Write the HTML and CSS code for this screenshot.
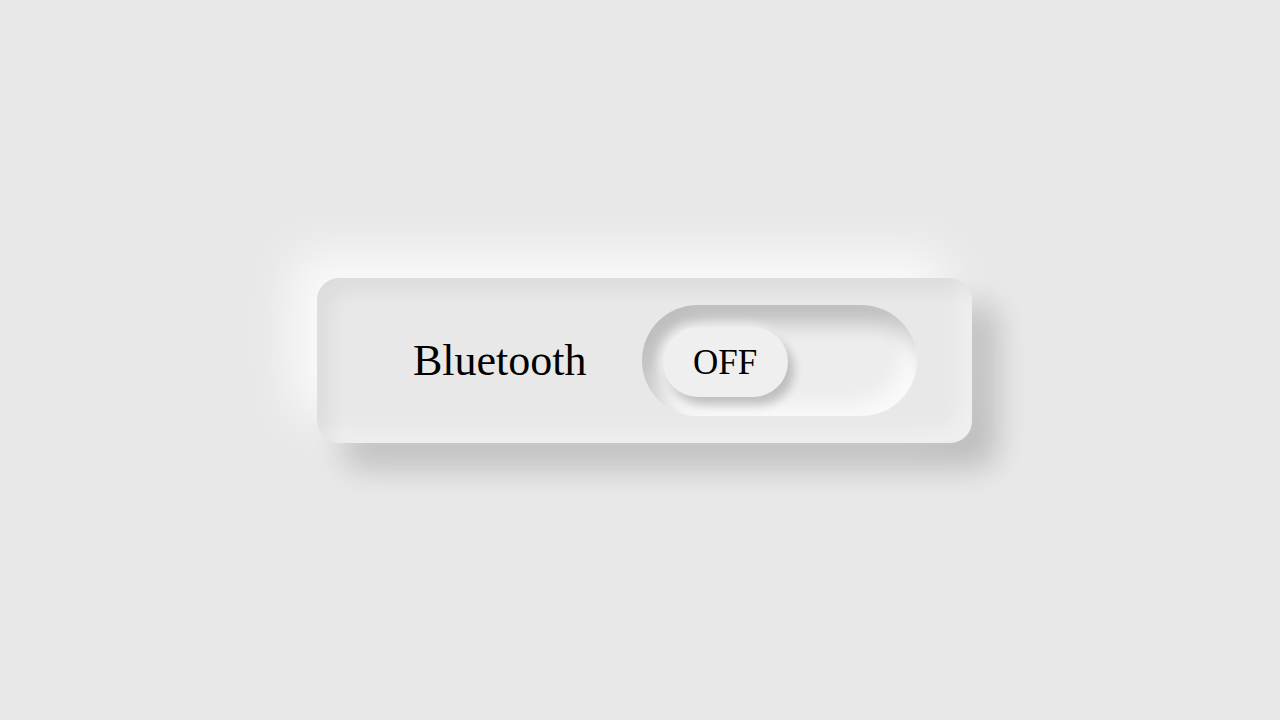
FILE: index.html
```html
<!DOCTYPE html>
<html lang="en">
<head>
    <meta charset="UTF-8">
    <meta name="viewport" content="width=device-width, initial-scale=1.0">
    <title>Bluetooth</title>
    <link rel="stylesheet" href="styles.css">
</head>
<body>
    <div class="page">
        <div class="card">
            <span class="label">Bluetooth</span>
            <div class="track">
                <div class="knob">OFF</div>
            </div>
        </div>
    </div>
</body>
</html>
```

FILE: styles.css
```css
* {
    margin: 0;
    padding: 0;
    box-sizing: border-box;
}

html, body {
    width: 100%;
    height: 100%;
    background-color: #e8e8e8;
}

body {
    font-family: "Liberation Serif", "Times New Roman", serif;
    color: #000;
}

.page {
    height: 100vh;
    display: flex;
    align-items: center;
    justify-content: center;
    padding-left: 9px;
}

.card {
    width: 655px;
    height: 165px;
    border-radius: 22px;
    background: #e8e8e8;
    display: flex;
    align-items: center;
    padding: 0 55px 0 96px;
    box-shadow:
        -25px -25px 50px rgba(255, 255, 255, 0.8),
        25px 25px 30px rgba(0, 0, 0, 0.18),
        inset 12px 12px 20px rgba(0, 0, 0, 0.05),
        inset -12px -12px 20px rgba(255, 255, 255, 0.35);
}

.label {
    font-size: 44px;
    line-height: 1;
    margin-right: 55px;
    margin-top: 2px;
}

.track {
    width: 275px;
    height: 111px;
    border-radius: 56px;
    background: #ededed;
    padding: 22px 21px;
    box-shadow:
        inset 12px 18px 20px rgba(0, 0, 0, 0.2),
        inset -12px -12px 20px rgba(255, 255, 255, 0.7);
}

.knob {
    width: 125px;
    height: 70px;
    border-radius: 35px;
    background: #efefef;
    display: flex;
    align-items: center;
    justify-content: center;
    font-size: 35px;
    padding-top: 2px;
    box-shadow:
        6px 8px 10px rgba(0, 0, 0, 0.2),
        -4px -4px 8px rgba(255, 255, 255, 0.5);
}
```
